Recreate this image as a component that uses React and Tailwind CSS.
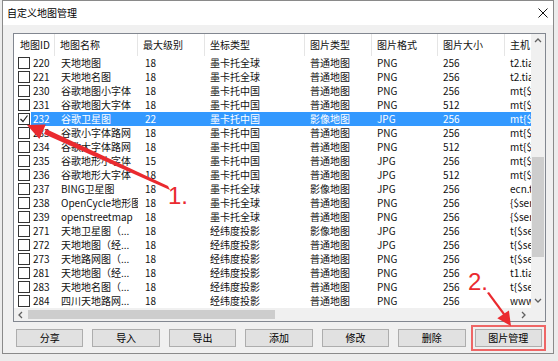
import React from "react";

const rows = [
  ["220", "天地地图", "18", "墨卡托全球", "普通地图", "PNG", "256", "t2.tianditu"],
  ["221", "天地地名图", "18", "墨卡托全球", "普通地图", "PNG", "256", "t2.tianditu"],
  ["230", "谷歌地图小字体", "18", "墨卡托中国", "普通地图", "PNG", "256", "mt{$server"],
  ["231", "谷歌地图大字体", "18", "墨卡托中国", "普通地图", "PNG", "512", "mt{$server"],
  ["232", "谷歌卫星图", "22", "墨卡托中国", "影像地图", "JPG", "256", "mt{$server"],
  ["233", "谷歌小字体路网", "18", "墨卡托中国", "普通地图", "PNG", "256", "mt{$server"],
  ["234", "谷歌大字体路网", "18", "墨卡托中国", "普通地图", "PNG", "512", "mt{$server"],
  ["235", "谷歌地形小字体", "15", "墨卡托中国", "普通地图", "JPG", "256", "mt{$server"],
  ["236", "谷歌地形大字体", "18", "墨卡托中国", "普通地图", "JPG", "512", "mt{$server"],
  ["237", "BING卫星图", "18", "墨卡托全球", "影像地图", "JPG", "256", "ecn.t{$se"],
  ["238", "OpenCycle地形图", "18", "墨卡托全球", "普通地图", "PNG", "256", "{$server"],
  ["239", "openstreetmap", "18", "墨卡托全球", "普通地图", "PNG", "256", "{$server"],
  ["271", "天地卫星图（...", "18", "经纬度投影", "影像地图", "JPG", "256", "t{$server"],
  ["272", "天地地图（经...", "18", "经纬度投影", "普通地图", "JPG", "256", "t{$server"],
  ["273", "天地路网图（...", "18", "经纬度投影", "普通地图", "PNG", "256", "t{$server"],
  ["281", "天地地图（经...", "18", "经纬度投影", "普通地图", "PNG", "256", "t1.tianditu"],
  ["283", "天地地名图（...", "18", "经纬度投影", "普通地图", "PNG", "256", "t{$server"],
  ["284", "四川天地路网...", "18", "经纬度投影", "普通地图", "PNG", "256", "www.scgis"],
];

const headers = [
  { label: "地图ID", cls: "w-[41px] pl-[6px]" },
  { label: "地图名称", cls: "w-[83px] pl-[5px]" },
  { label: "最大级别", cls: "w-[67px] pl-[5px]" },
  { label: "坐标类型", cls: "w-[100px] pl-[5px]" },
  { label: "图片类型", cls: "w-[67px] pl-[5px]" },
  { label: "图片格式", cls: "w-[66px] pl-[5px]" },
  { label: "图片大小", cls: "w-[67px] pl-[5px]" },
];

// cell widths after the id cell
const cellCls = [
  "w-[83px] pl-[6px]",
  "w-[67px] pl-[7px]",
  "w-[100px] pl-[5px]",
  "w-[67px] pl-[5px]",
  "w-[66px] pl-[5px]",
  "w-[67px] pl-[5px]",
];

const buttons = ["分享", "导入", "导出", "添加", "修改", "删除", "图片管理"];

const Chevron = ({ dir }) => {
  const pts = {
    up: "1,5 4,2 7,5",
    down: "1,2 4,5 7,2",
    left: "5,1 2,4 5,7",
    right: "2,1 5,4 2,7",
  }[dir];
  return (
    <svg width="8" height="8" viewBox="0 0 8 8">
      <polyline points={pts} fill="none" stroke="#606060" strokeWidth="1.3" />
    </svg>
  );
};

const Checkbox = ({ checked }) => (
  <div className="w-[12px] h-[12px] border border-[#333333] bg-white flex items-center justify-center">
    {checked && (
      <svg width="10" height="10" viewBox="0 0 10 10">
        <polyline points="1.5,5 4,7.5 8.5,1.5" fill="none" stroke="#222" strokeWidth="1.2" />
      </svg>
    )}
  </div>
);

const Row = ({ row }) => {
  const selected = row[0] === "232";
  return (
    <div className="flex h-[14px] items-center">
      <div className="w-[17px] h-full flex items-center pl-[4px] shrink-0">
        <Checkbox checked={selected} />
      </div>
      <div
        className={`flex flex-1 h-full items-center min-w-0 ${
          selected ? "bg-[#3399ff] text-white" : "text-[#111]"
        }`}
      >
        <div className="w-[24px] pl-[2px] shrink-0">{row[0]}</div>
        {row.slice(1, 7).map((v, i) => (
          <div key={i} className={`${cellCls[i]} shrink-0 whitespace-nowrap overflow-hidden`}>
            {v}
          </div>
        ))}
        <div className="flex-1 pl-[5px] whitespace-nowrap overflow-hidden">{row[7]}</div>
      </div>
    </div>
  );
};

export default function App() {
  return (
    <div
      className="w-[558px] h-[361px] bg-[#ececec] pl-[2px] relative overflow-hidden text-[10px] leading-[14px]"
      style={{ fontFamily: '"Noto Sans CJK SC", "Liberation Sans", sans-serif' }}
    >
      <div className="w-[552px] h-[354px] border border-[#8a8a8a] bg-[#f0f0f0] flex flex-col">
        {/* Title bar */}
        <div className="h-[24px] bg-white flex items-center justify-between pl-[4px] pr-[5px]">
          <span className="text-[10px] text-black">自定义地图管理</span>
          <svg width="10" height="10" viewBox="0 0 10 10">
            <path d="M0.5 0.5L9.5 9.5M9.5 0.5L0.5 9.5" stroke="#111" strokeWidth="1" />
          </svg>
        </div>

        {/* Body */}
        <div className="flex-1 flex flex-col pt-[8px] pl-[10px] pr-[7px]">
          <div className="h-[289px] border border-[#828790] bg-white flex flex-col">
            <div className="flex flex-1 min-h-0">
              <div className="flex-1 flex flex-col min-w-0">
                {/* Header */}
                <div className="flex h-[22px] items-center text-[#111]">
                  {headers.map((h) => (
                    <div
                      key={h.label}
                      className={`${h.cls} shrink-0 h-full flex items-center border-r border-[#e5e5e5]`}
                    >
                      {h.label}
                    </div>
                  ))}
                  <div className="flex-1 pl-[5px] whitespace-nowrap overflow-hidden">主机</div>
                </div>
                {rows.map((r) => (
                  <Row key={r[0]} row={r} />
                ))}
              </div>
              {/* Vertical scrollbar */}
              <div className="w-[14px] bg-[#f0f0f0] flex flex-col">
                <div className="h-[14px] flex items-center justify-center">
                  <Chevron dir="up" />
                </div>
                <div className="flex-1 pt-[109px] px-[1px]">
                  <div className="h-[100px] bg-[#cdcdcd]" />
                </div>
                <div className="h-[14px] flex items-center justify-center">
                  <Chevron dir="down" />
                </div>
              </div>
            </div>
            {/* Horizontal scrollbar */}
            <div className="h-[13px] flex bg-[#f0f0f0]">
              <div className="w-[14px] flex items-center justify-center">
                <Chevron dir="left" />
              </div>
              <div className="flex-1 py-[2px]">
                <div className="w-[247px] h-full bg-[#cdcdcd]" />
              </div>
              <div className="w-[14px] flex items-center justify-center">
                <Chevron dir="right" />
              </div>
              <div className="w-[14px]" />
            </div>
          </div>

          {/* Buttons */}
          <div className="flex gap-[9px] mt-[7px] pl-[3px] pr-[4px]">
            {buttons.map((b) => (
              <button
                key={b}
                className={`flex-1 h-[18px] bg-[#e1e1e1] border border-[#adadad] text-[10px] leading-[16px] text-black ${
                  b === "图片管理" ? "outline-2 outline-[#ee6666] outline-offset-[2px]" : ""
                }`}
              >
                {b}
              </button>
            ))}
          </div>
        </div>
      </div>

      {/* Annotations */}
      <svg className="absolute left-0 top-0 pointer-events-none" width="558" height="361" viewBox="0 0 558 361">
        <polygon points="168,186 170,190 44,134 46,129" fill="#ea2a2f" />
        <polygon points="27,125 39.4,139 45.8,124.4" fill="#ea2a2f" />
        <polygon points="487,293 489,292 506,315 504,316" fill="#ea2a2f" />
        <polygon points="511,326 497.3,318.3 508.9,310.5" fill="#ea2a2f" />
      </svg>
      <span
        className="absolute left-[168px] top-[184px] text-[24px] leading-[24px] text-[#ea2a2f]"
        style={{ fontFamily: '"Liberation Sans", sans-serif' }}
      >
        1.
      </span>
      <span
        className="absolute left-[468px] top-[270px] text-[24px] leading-[24px] text-[#ea2a2f]"
        style={{ fontFamily: '"Liberation Sans", sans-serif' }}
      >
        2.
      </span>
    </div>
  );
}
